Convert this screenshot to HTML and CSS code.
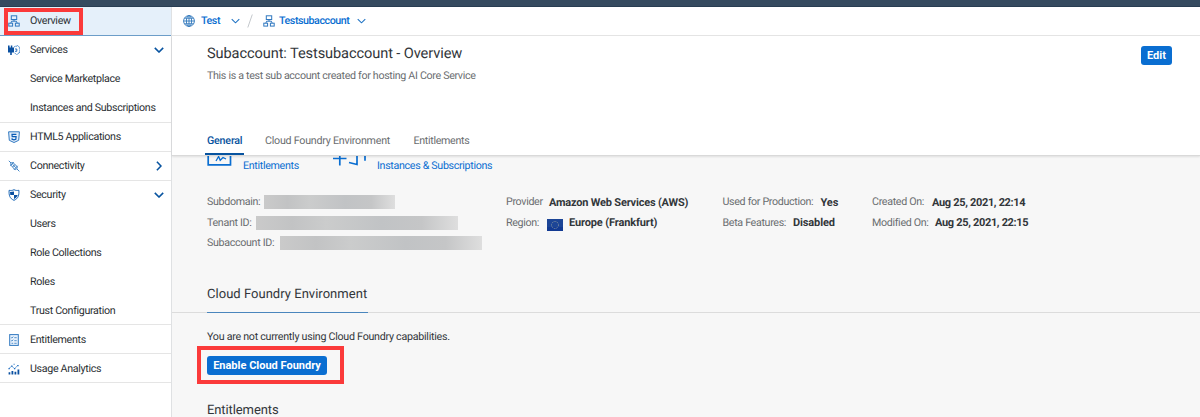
FILE: index.html
```html
<!DOCTYPE html>
<html lang="en">
<head>
<meta charset="utf-8">
<title>Subaccount Overview</title>
<link rel="stylesheet" href="styles.css">
</head>
<body>
<svg class="defs" width="0" height="0" aria-hidden="true">
  <symbol id="org" viewBox="0 0 12 12"><g fill="none" stroke="currentColor" stroke-width="1"><rect x="3.300" y=".8" width="5.400" height="3.700"/><path d="M6 4.500v1.700M2.800 8.200l.8-2h4.800l.8 2"/><rect x=".8" y="8.200" width="3.800" height="2.900"/><rect x="7.400" y="8.200" width="3.800" height="2.900"/></g></symbol>
  <symbol id="down" viewBox="0 0 10 6"><path d="M.8.900 5 5 9.200.900" fill="none" stroke="currentColor" stroke-width="var(--w,1.600)"/></symbol>
</svg>
<div class="shell"></div>
<div class="page">
  <nav class="side">
    <a class="row current"><svg class="ico" viewBox="0 0 12 12"><use href="#org"/></svg><span>Overview</span></a>
    <a class="row"><svg class="ico" viewBox="0 0 12 12"><path d="M0 1.500h1.600v2h1.200v-2h1.500v2H6v5H3.800v2.500H2.200V8.500H0z" fill="#0a50a1"/><path d="M6 3.500 7 2l1.500.6L9.300 1l1.200 1.700 1.200.3-.3 1.700.6 1.300-.6 1.300.2 1.700-1.600.3L8.800 11 7.500 9.500 6 8.800" fill="none" stroke="#4a8bd0" stroke-width="1" stroke-dasharray="1.600 .6"/><path d="M7 5h1.800v2.300H7" fill="none" stroke="#2a6ebb"/></svg><span>Services</span><svg class="arrow" viewBox="0 0 10 6"><use href="#down"/></svg></a>
    <a class="row sub"><span>Service Marketplace</span></a>
    <a class="row sub line"><span>Instances and Subscriptions</span></a>
    <a class="row line"><svg class="ico" viewBox="0 0 12 12"><path d="M.6.800h10.800l-.7 8.500L6 11.500 1.300 9.300z" fill="#e4eefa" stroke="currentColor"/><path d="M8.400 3.300H4l.2 2.400h3.900l-.3 2.600L6 8.900l-1.900-.6V7.300" fill="none" stroke="#0a5bb5" stroke-width="1.200"/></svg><span>HTML5 Applications</span></a>
    <a class="row line"><svg class="ico" viewBox="0 0 12 12"><g fill="none" stroke="currentColor" stroke-width=".9"><path d="m.8.800 2.400 2.400M8.800 8.800l2.600 2.600M2.400 5.800l3.300-3.600M6 9.800l3.700-4"/><path d="M3 5.200C1.800 3.500 3.900 1.500 5.300 3l3.800 3.500M3 5.200l3.500 4.100C8 10.400 9.900 8 9.100 6.500M4.700 4.300l3 3.400M4.700 7l2-2.300"/></g></svg><span>Connectivity</span><svg class="arrow right" viewBox="0 0 10 6"><use href="#down"/></svg></a>
    <a class="row"><svg class="ico" viewBox="0 0 12 12"><path d="M6 .7c1.600.9 3.200.9 4.900.6.300 5-.6 8.300-4.900 10C1.700 9.600.800 6.300 1.100 1.300 2.800 1.600 4.400 1.600 6 .7z" fill="#fff" stroke="#1b66b5"/><path d="M6 2.500V6h3.700c-.5 1.800-1.600 3-3.700 4V6H2.300L2 3z" fill="#0a50a1"/></svg><span>Security</span><svg class="arrow" viewBox="0 0 10 6"><use href="#down"/></svg></a>
    <a class="row sub"><span>Users</span></a>
    <a class="row sub"><span>Role Collections</span></a>
    <a class="row sub"><span>Roles</span></a>
    <a class="row sub line"><span>Trust Configuration</span></a>
    <a class="row line"><svg class="ico" viewBox="0 0 12 12"><rect x="1.700" y=".6" width="8.600" height="10.800" fill="#e9f2fc" stroke="currentColor"/><path d="m3.200 3.500.8.600 1.200-1.500M3.200 6.500l.8.600 1.200-1.500M6.300 3.700h2.400M6.300 6.700h2.400M3.500 9.300h1.700M6.300 9.300h2.400" fill="none" stroke="currentColor" stroke-width=".8"/></svg><span>Entitlements</span></a>
    <a class="row line"><svg class="ico" viewBox="0 0 12 12"><path d="M.6 11.500V9.300h1.700v2.200zM3.500 11.500V8h1.800v3.500zM6.500 11.500V8.800h1.800v2.700zM9.500 11.500V6.500h1.800v5z" fill="#0a50a1"/><path d="m.8 5.500 3-2.300 2.800 2.500 3.300-3.500" fill="none" stroke="#3f86d2" stroke-width=".7"/><path d="M.5 5h1.300v1.300H.5zM3.200 2.500h1.300v1.300H3.200zM6 5h1.300v1.300H6zM9.300 2h1.300v1.300H9.300zM5.600.800h1v1h-1z" fill="#1f6cbd"/></svg><span>Usage Analytics</span></a>
  </nav>
  <main class="main">
    <div class="crumbs">
      <svg class="globe" viewBox="0 0 12 12"><g fill="none" stroke="currentColor" stroke-width=".9"><circle cx="6" cy="6" r="5.400"/><ellipse cx="6" cy="6" rx="2.600" ry="5.400"/><path d="M6 .6v10.800M.6 6h10.800M1.400 3.200h9.200M1.400 8.800h9.200"/></g></svg>
      <a class="c-test">Test</a><svg class="thin" viewBox="0 0 10 6"><use href="#down"/></svg>
      <svg class="slash" viewBox="0 0 6 14"><path d="M5.300.500.800 13.500" stroke="#c4c8cc"/></svg>
      <svg class="orgc" viewBox="0 0 12 12"><use href="#org"/></svg>
      <a class="c-sub">Testsubaccount</a><svg class="thin" viewBox="0 0 10 6"><use href="#down"/></svg>
    </div>
    <header class="head">
      <div class="titles">
        <h1>Subaccount: Testsubaccount - Overview</h1>
        <p>This is a test sub account created for hosting AI Core Service</p>
      </div>
      <button class="btn edit">Edit</button>
      <div class="tabs"><a class="tab on"><span>General</span></a><a class="tab t2">Cloud Foundry Environment</a><a class="tab t3">Entitlements</a></div>
    </header>
    <div class="body">
      <div class="tiles">
        <svg class="tile1" viewBox="0 0 26 11"><path d="M1.200 0v8.800h22.300V0" fill="none" stroke="currentColor" stroke-width="1.700"/><path d="m9 5 2.600-4.500 1.600 3.800 2.800-2.800 3 1.500" fill="none" stroke="currentColor" stroke-width="1.300"/></svg>
        <a class="l1">Entitlements</a>
        <svg class="tile2" viewBox="0 0 34 11"><path d="M0 2.500h13.500M6.800 0v9.500M16 6.500l8 2V0M32 0v4.800" fill="none" stroke="currentColor" stroke-width="1.700"/></svg>
        <a class="l2">Instances &amp; Subscriptions</a>
      </div>
      <div class="facts">
        <div class="col ca">
          <div class="fact"><span class="f1">Subdomain:</span><i class="mask m1"></i></div>
          <div class="fact"><span class="f2">Tenant ID:</span><i class="mask m2"></i></div>
          <div class="fact"><span class="f3">Subaccount ID:</span><i class="mask m3"></i></div>
        </div>
        <div class="col cb">
          <div class="fact"><span class="f4">Provider</span><b class="b1">Amazon Web Services (AWS)</b></div>
          <div class="fact"><span class="f5">Region:</span><svg class="flag" viewBox="0 0 16 12"><rect width="16" height="12" fill="#1c4596"/><rect y="8" width="16" height="4" fill="#123a92"/><circle cx="8" cy="6" r="3.500" fill="none" stroke="#8291a0" stroke-width="1" stroke-dasharray="1 .83"/></svg><b class="b2">Europe (Frankfurt)</b></div>
        </div>
        <div class="col cc">
          <div class="fact"><span class="f6">Used for Production:</span><b class="b2">Yes</b></div>
          <div class="fact"><span class="f7">Beta Features:</span><b class="b2">Disabled</b></div>
        </div>
        <div class="col cd">
          <div class="fact"><span class="f8">Created On:</span><b class="b5">Aug 25, 2021, 22:14</b></div>
          <div class="fact"><span class="f9">Modified On:</span><b class="b5">Aug 25, 2021, 22:15</b></div>
        </div>
      </div>
      <div class="sect"><h2>Cloud Foundry Environment</h2></div>
      <p class="note">You are not currently using Cloud Foundry capabilities.</p>
      <div class="callout"><button class="btn enable">Enable Cloud Foundry</button></div>
      <h2 class="ent">Entitlements</h2>
    </div>
  </main>
</div>
<div class="highlight"></div>
</body>
</html>
```
FILE: styles.css
```css
* { box-sizing: border-box; }
body { margin: 0; width: 1200px; height: 417px; overflow: hidden; background: #fff; font: 10.7px/14px Roboto, "Liberation Sans", sans-serif; letter-spacing: -.33px; text-rendering: geometricPrecision; color: #32363a; }
.defs { position: absolute; }
svg { display: block; flex: none; }
h1, h2, p { margin: 0; font-weight: 400; white-space: nowrap; }
a, span, b { white-space: nowrap; }
.shell { height: 7px; background: #354a5f; border-bottom: 1px solid #283d52; }
.page { display: flex; height: 410px; }
.side { width: 172px; flex: none; border-right: 1px solid #dfe1e3; }
.row { display: flex; align-items: center; height: 28.95px; padding: 1px 7px 0 8px; border-bottom: 1px solid transparent; color: #2b2f33; }
.row.sub { padding-left: 30px; }
.row.line { border-bottom-color: #e5e5e5; }
.row.current { height: 29px; padding-top: 0; background: #e5f0fa; border-bottom-color: #6c9dc8; }
.ico { width: 12px; height: 12px; margin-right: 10px; color: #3078c0; }
.arrow { width: 10px; height: 6px; margin-left: auto; color: #0854a0; }
.arrow.right { transform: rotate(-90deg); }
.main { flex: 1; min-width: 0; display: flex; flex-direction: column; }
.crumbs { display: flex; align-items: center; height: 29px; padding: 0 0 0 11px; border-bottom: 1px solid #e5e5e5; color: #0a6ed1; font-weight: 500; letter-spacing: -.45px; }
.globe { width: 12px; height: 12px; margin-right: 6px; color: #2e76bb; }
.c-test { width: 30px; }
.thin { width: 9px; height: 6px; --w: 1.2; color: #1f73c4; }
.slash { width: 6px; height: 14px; margin: 0 10px 0 7px; }
.orgc { width: 12px; height: 12px; margin-right: 4px; color: #3078c0; }
.c-sub { width: 78px; }
.head { display: grid; grid-template-columns: 1fr 31px; grid-template-rows: 97px 22px; height: 120px; padding: 0 28px 0 35px; border-bottom: 1px solid #d9d9d9; box-shadow: 0 1px 2px #0000001a; position: relative; }
h1 { margin-top: 7px; font-size: 14.6px; line-height: 20px; letter-spacing: -.1px; }
.titles p { margin-top: 6px; color: #6a6d70; }
.btn { border: 0; border-radius: 3px; padding: 0; background: #0a6ed1; color: #fff; font: 700 11px/19px Roboto, sans-serif; letter-spacing: 0; height: 19px; white-space: nowrap; }
.edit { width: 31px; margin-top: 10px; }
.tabs { grid-column: 1 / 3; display: flex; color: #6a6d70; }
.tab { line-height: 16px; height: 22px; }
.on { width: 39px; margin: 0 21px 0 -2px; padding-left: 2px; border-bottom: 2px solid #0854a0; color: #0854a0; font-weight: 500; letter-spacing: -.2px; }
.t2 { width: 148.500px; letter-spacing: -.24px; }
.body { flex: 1; background: #f7f7f7; overflow: hidden; }
.tiles { display: flex; height: 28px; padding-left: 35px; color: #0a6ed1; }
.tiles a { margin-top: 3px; }
.tile1 { width: 26px; height: 11px; margin-right: 10px; }
.l1 { width: 90px; }
.tile2 { width: 34px; height: 11px; margin-right: 10px; }
.facts { display: flex; height: 91px; padding: 8px 0 0 35px; }
.ca { width: 299px; }
.cb { width: 216.500px; }
.cc { width: 149.500px; }
.fact { display: flex; align-items: center; height: 20.400px; color: #6a6d70; }
.fact b { position: relative; top: .5px; font-size: 11px; letter-spacing: -.2px; color: #32363a; }
.fact .b2 { letter-spacing: -.13px; }
.fact .b5 { letter-spacing: -.33px; }
.f1 { width: 57px; } .f2 { width: 49px; } .f3 { width: 73px; } .f4 { width: 43px; } .f5 { width: 41px; }
.f6 { width: 98px; } .f7 { width: 70.500px; } .f8 { width: 60px; } .f9 { width: 63px; }
.mask { height: 14px; background: linear-gradient(90deg, #cacaca, #c2c3c4 18%, #cbcccc 35%, #c1c3c5 62%, #c5c6c7 82%, #dedede); }
.m1 { width: 131px; } .m2 { width: 202px; } .m3 { width: 202px; }
.flag { width: 16px; height: 12px; margin: 5px 6px 0 0; }
.sect { height: 38px; padding-left: 35px; border-bottom: 1px solid #dcdcdc; }
h2 { font-size: 13px; line-height: 20px; letter-spacing: .03px; }
.sect h2 { width: 161px; height: 38px; padding-top: 10px; border-bottom: 1px solid #4a86bd; }
.note { margin: 17px 0 0 35px; letter-spacing: -.27px; }
.callout { width: 147px; height: 38px; margin: 2px 0 0 25px; padding: 6px; border: 4px solid #fb3a3a; }
.enable { width: 120px; }
.ent { margin: 17px 0 0 35px; letter-spacing: -.1px; }
.highlight { position: absolute; left: 4px; top: 8px; width: 79px; height: 27px; border: 4px solid #fb3a3a; }
```
